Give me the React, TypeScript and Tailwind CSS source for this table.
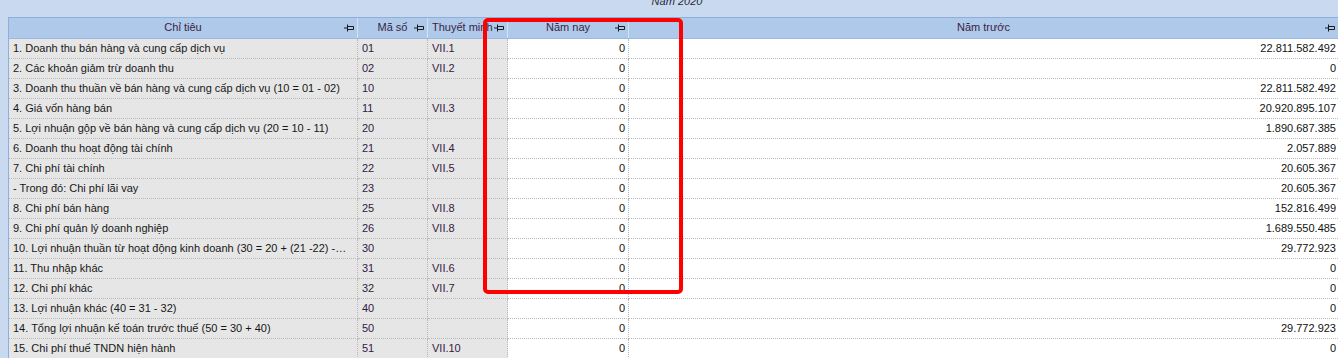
import React from "react";

type Row = { name: string; code: string; note: string; cur: string; prev: string };

const rows: Row[] = [
  { name: "1. Doanh thu bán hàng và cung cấp dịch vụ", code: "01", note: "VII.1", cur: "0", prev: "22.811.582.492" },
  { name: "2. Các khoản giảm trừ doanh thu", code: "02", note: "VII.2", cur: "0", prev: "0" },
  { name: "3. Doanh thu thuần về bán hàng và cung cấp dịch vụ (10 = 01 - 02)", code: "10", note: "", cur: "0", prev: "22.811.582.492" },
  { name: "4. Giá vốn hàng bán", code: "11", note: "VII.3", cur: "0", prev: "20.920.895.107" },
  { name: "5. Lợi nhuận gộp về bán hàng và cung cấp dịch vụ (20 = 10 - 11)", code: "20", note: "", cur: "0", prev: "1.890.687.385" },
  { name: "6. Doanh thu hoạt động tài chính", code: "21", note: "VII.4", cur: "0", prev: "2.057.889" },
  { name: "7. Chi phí tài chính", code: "22", note: "VII.5", cur: "0", prev: "20.605.367" },
  { name: "- Trong đó: Chi phí lãi vay", code: "23", note: "", cur: "0", prev: "20.605.367" },
  { name: "8. Chi phí bán hàng", code: "25", note: "VII.8", cur: "0", prev: "152.816.499" },
  { name: "9. Chi phí quản lý doanh nghiệp", code: "26", note: "VII.8", cur: "0", prev: "1.689.550.485" },
  { name: "10. Lợi nhuận thuần từ hoạt động kinh doanh (30 = 20 + (21 -22) - (25 + 26))", code: "30", note: "", cur: "0", prev: "29.772.923" },
  { name: "11. Thu nhập khác", code: "31", note: "VII.6", cur: "0", prev: "0" },
  { name: "12. Chi phí khác", code: "32", note: "VII.7", cur: "0", prev: "0" },
  { name: "13. Lợi nhuận khác (40 = 31 - 32)", code: "40", note: "", cur: "0", prev: "0" },
  { name: "14. Tổng lợi nhuận kế toán trước thuế (50 = 30 + 40)", code: "50", note: "", cur: "0", prev: "29.772.923" },
  { name: "15. Chi phí thuế TNDN hiện hành", code: "51", note: "VII.10", cur: "0", prev: "0" },
];

function Pin() {
  return (
    <svg width="10" height="8" viewBox="0 0 10 8" className="absolute right-[3px] top-[6px]">
      <path d="M0 4H3M3.5 0.5V7.5M3.5 2.5H9.5V5.5H3.5" fill="none" stroke="#1a1a1a" strokeWidth="1" />
    </svg>
  );
}

const cols = "grid grid-cols-[349px_70px_80px_121px_1fr]";
const cell = "h-5 border-b border-r border-dotted border-[#b9b9b9] leading-[19px] whitespace-nowrap overflow-hidden";
const head = "relative h-5 border-r border-[#d2e1f3] leading-[19px] whitespace-nowrap overflow-hidden text-[#3a1f45]";

export default function App() {
  return (
    <div className="relative w-[1338px] h-[358px] overflow-hidden bg-[#c9daf0] pl-2 font-['Liberation_Sans',Arial,sans-serif] text-[11px]">
      <div className="h-[17px] text-center italic text-[#2a2a3a]">
        <span className="relative -top-[7px] leading-[14px] pl-[8px]">Năm 2020</span>
      </div>
      <div className="border-l border-t border-[#8eaedb] bg-white">
        <div className={`${cols} bg-[#aec9e9] border-b border-[#9bb8df]`}>
          <div className={`${head} text-center`}>Chỉ tiêu<Pin /></div>
          <div className={`${head} text-center`}>Mã số<Pin /></div>
          <div className={`${head} pl-1`}>Thuyết minh<Pin /></div>
          <div className={`${head} text-center`}>Năm nay<Pin /></div>
          <div className={`${head} text-center border-r-0`}>Năm trước<Pin /></div>
        </div>
        {rows.map((r) => (
          <div key={r.code} className={cols}>
            <div className={`${cell} bg-[#e6e6e6] text-[#161616] pl-1 pr-[9px] text-ellipsis`}>{r.name}</div>
            <div className={`${cell} bg-[#e6e6e6] text-[#33203f] pl-1`}>{r.code}</div>
            <div className={`${cell} bg-[#e6e6e6] text-[#33203f] pl-1`}>{r.note}</div>
            <div className={`${cell} bg-white text-right text-[#111] pr-[3px]`}>{r.cur}</div>
            <div className={`${cell} bg-white text-right text-[#111] border-r-0 pr-[2px]`}>{r.prev}</div>
          </div>
        ))}
      </div>
      <div className="absolute left-[483px] top-[18px] w-[200px] h-[276px] border-4 border-[#ff0000] rounded-[5px]" />
    </div>
  );
}
